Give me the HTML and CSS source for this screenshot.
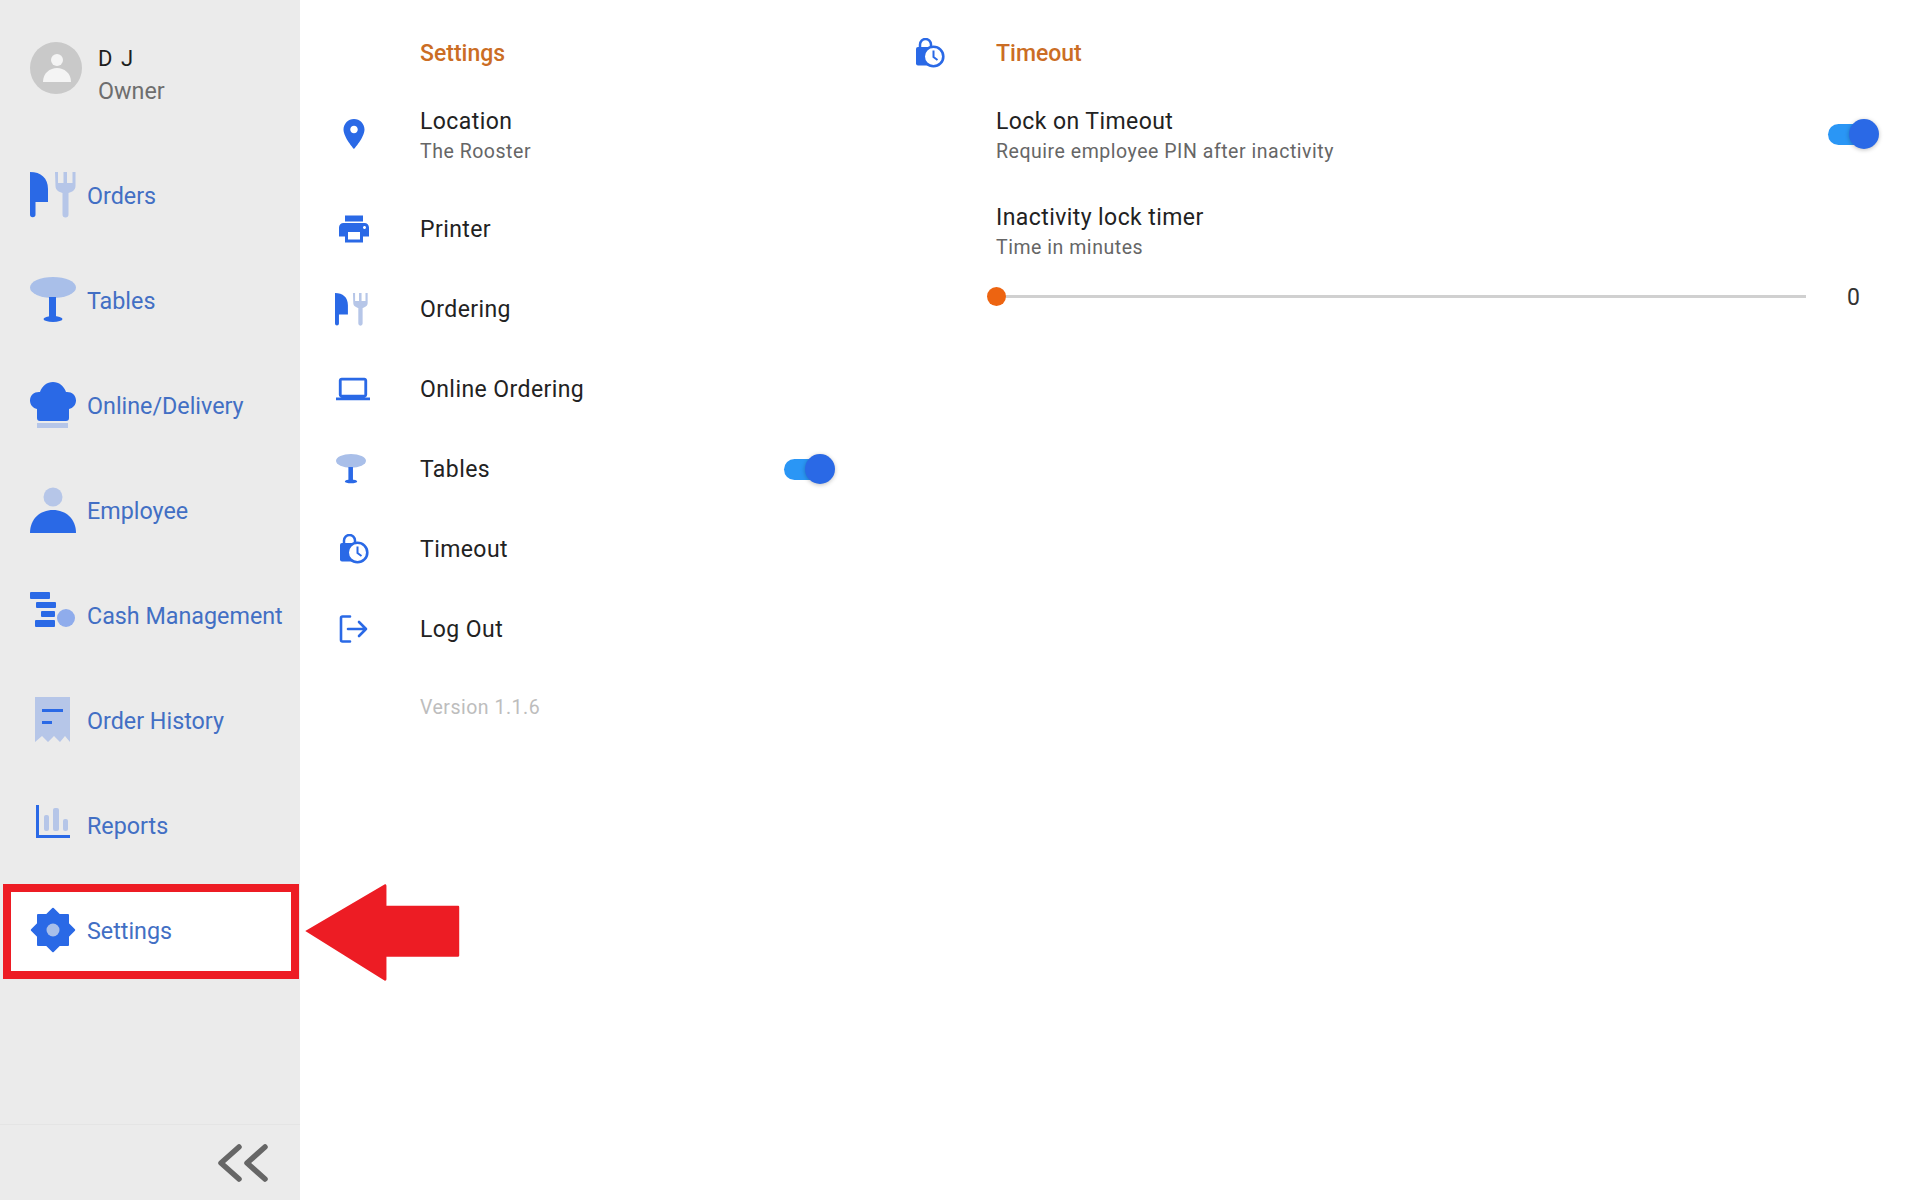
FILE: index.html
```html
<!DOCTYPE html>
<html lang="en">
<head>
<meta charset="utf-8">
<title>Settings</title>
<link rel="stylesheet" href="styles.css">
</head>
<body>
<svg class="defs" width="0" height="0" aria-hidden="true">
  <defs>
    <symbol id="i-orders" viewBox="0 0 46 46">
      <path class="dark" d="M0 0C11 0 18 6 18 17V30H5.500V42.500a2.750 2.750 0 0 1-5.500 0Z"/>
      <path class="pale" d="M25 0h3v11h5.500V0h3.500v11h5.500V0h3v14c0 4-3.500 6-7 7v21.500a3 3 0 0 1-6 0V21c-3.500-1-7-3-7-7Z"/>
    </symbol>
    <symbol id="i-tables" viewBox="0 0 46 46">
      <ellipse class="mid" cx="23" cy="10.500" rx="23" ry="10.500"/>
      <rect class="dark" x="19" y="20" width="7" height="22"/>
      <ellipse class="dark" cx="23" cy="42" rx="9.500" ry="3"/>
    </symbol>
    <symbol id="i-online" viewBox="0 0 46 46">
      <path class="dark" d="M7 27C3 26 0 23 0 18.500 0 13 4.500 9.500 10 10 12 4 17 0 23 0s11 4 13 10c5.500-.5 10 3 10 8.500 0 4.500-3 7.500-7 8.500v9c0 2-1 3-3 3H10c-2 0-3-1-3-3Z"/>
      <rect class="pale" x="7" y="41" width="31" height="5"/>
    </symbol>
    <symbol id="i-employee" viewBox="0 0 46 46">
      <circle class="pale" cx="23" cy="10" r="9.500"/>
      <path class="dark" d="M0 46C0 32 10 23 23 23S46 32 46 46Z"/>
    </symbol>
    <symbol id="i-cash" viewBox="0 0 46 46">
      <rect class="dark" x="0" y="0" width="20" height="7" rx="1"/>
      <rect class="dark" x="6" y="10" width="20" height="6" rx="1"/>
      <rect class="dark" x="11" y="19" width="14" height="6" rx="1"/>
      <rect class="dark" x="5" y="28" width="20" height="7" rx="1"/>
      <circle class="soft" cx="36" cy="26" r="9"/>
    </symbol>
    <symbol id="i-history" viewBox="0 0 46 46">
      <path class="pale" d="M5 0H40V45L35 39 30 45 24 39 18 45 12 39 5 45Z"/>
      <rect class="dark" x="12" y="12" width="21" height="3"/>
      <rect class="dark" x="12" y="24" width="10" height="3"/>
    </symbol>
    <symbol id="i-reports" viewBox="0 0 46 46">
      <rect class="dark" x="6" y="3" width="3" height="33"/>
      <rect class="dark" x="6" y="33" width="34" height="3"/>
      <rect class="pale" x="14" y="13" width="5" height="16" rx="2"/>
      <rect class="pale" x="23" y="6" width="6" height="23" rx="2"/>
      <rect class="pale" x="33" y="17" width="5" height="12" rx="2"/>
    </symbol>
    <symbol id="i-gear" viewBox="0 0 46 46">
      <rect class="dark" x="7" y="7" width="32" height="32" rx="1"/>
      <rect class="dark" x="7" y="7" width="32" height="32" rx="1" transform="rotate(45 23 23)"/>
      <circle class="mid" cx="23" cy="23" r="6.500"/>
    </symbol>
    <symbol id="i-pin" viewBox="0 0 24 24">
      <path class="dark" d="M12 2C8.130 2 5 5.130 5 9c0 5.250 7 13 7 13s7-7.750 7-13c0-3.870-3.130-7-7-7zm0 9.500c-1.380 0-2.500-1.120-2.500-2.500s1.120-2.500 2.500-2.500 2.500 1.120 2.500 2.500-1.120 2.500-2.500 2.500z"/>
    </symbol>
    <symbol id="i-print" viewBox="0 0 24 24">
      <path class="dark" d="M19 8H5c-1.660 0-3 1.340-3 3v6h4v4h12v-4h4v-6c0-1.660-1.340-3-3-3zm-3 11H8v-5h8v5zm3-7c-.550 0-1-.450-1-1s.450-1 1-1 1 .450 1 1-.450 1-1 1zm-1-9H6v4h12V3z"/>
    </symbol>
    <symbol id="i-laptop" viewBox="0 0 24 24">
      <path class="dark" d="M20 18c1.100 0 1.990-.900 1.990-2L22 6c0-1.100-.900-2-2-2H4c-1.100 0-2 .900-2 2v10c0 1.100.900 2 2 2H0v2h24v-2h-4zM4 6h16v10H4V6z"/>
    </symbol>
    <symbol id="i-timeout" viewBox="0 0 30 30">
      <path class="line" d="M5 10V6.500a5.500 5.500 0 0 1 11 0V10"/>
      <rect class="dark" x="1" y="9" width="18" height="18.500" rx="2"/>
      <circle class="ring" cx="18.500" cy="18.500" r="9.800"/>
      <path class="hand" d="M18.500 12.500V19l4 3"/>
    </symbol>
    <symbol id="i-logout" viewBox="0 0 30 30">
      <path class="exit" d="M11 2.500H3.500a1.500 1.500 0 0 0-1.500 1.500V26a1.500 1.500 0 0 0 1.500 1.500H11"/>
      <path class="exit" d="M9 15H27M20 8l7 7-7 7"/>
    </symbol>
  </defs>
</svg>

<div class="app">
  <aside class="sidebar">
    <div class="profile">
      <svg class="avatar" viewBox="0 0 52 52" aria-hidden="true">
        <circle class="avatar-bg" cx="26" cy="26" r="26"/>
        <circle class="avatar-fg" cx="27" cy="18" r="6"/>
        <path class="avatar-fg" d="M13 40C13 31 20 26 27 26S41 31 41 40Z"/>
      </svg>
      <div class="profile-text">
        <div class="profile-name">D J</div>
        <div class="profile-role">Owner</div>
      </div>
    </div>
    <nav class="nav">
      <a class="nav-item"><svg class="nav-icon"><use href="#i-orders"/></svg><span class="nav-label">Orders</span></a>
      <a class="nav-item"><svg class="nav-icon"><use href="#i-tables"/></svg><span class="nav-label">Tables</span></a>
      <a class="nav-item"><svg class="nav-icon"><use href="#i-online"/></svg><span class="nav-label">Online/Delivery</span></a>
      <a class="nav-item"><svg class="nav-icon"><use href="#i-employee"/></svg><span class="nav-label">Employee</span></a>
      <a class="nav-item"><svg class="nav-icon"><use href="#i-cash"/></svg><span class="nav-label">Cash Management</span></a>
      <a class="nav-item"><svg class="nav-icon"><use href="#i-history"/></svg><span class="nav-label">Order History</span></a>
      <a class="nav-item"><svg class="nav-icon"><use href="#i-reports"/></svg><span class="nav-label">Reports</span></a>
      <a class="nav-item nav-item-active"><svg class="nav-icon"><use href="#i-gear"/></svg><span class="nav-label">Settings</span></a>
    </nav>
    <div class="sidebar-footer">
      <svg class="collapse" viewBox="0 0 52 38" aria-hidden="true">
        <path d="M22 3L4 19l18 16M48 3L30 19l18 16"/>
      </svg>
    </div>
  </aside>

  <main class="content">
    <section class="panel panel-left">
      <div class="row row-head">
        <div class="icon-cell"></div>
        <h2 class="heading">Settings</h2>
      </div>
      <div class="row row-tall">
        <div class="icon-cell"><svg class="icon-36"><use href="#i-pin"/></svg></div>
        <div class="text"><div class="title">Location</div><div class="sub">The Rooster</div></div>
      </div>
      <div class="row">
        <div class="icon-cell"><svg class="icon-36"><use href="#i-print"/></svg></div>
        <div class="text"><div class="title">Printer</div></div>
      </div>
      <div class="row">
        <div class="icon-cell"><svg class="icon-33 shift-left"><use href="#i-orders"/></svg></div>
        <div class="text"><div class="title">Ordering</div></div>
      </div>
      <div class="row">
        <div class="icon-cell"><svg class="icon-34 shift-small"><use href="#i-laptop"/></svg></div>
        <div class="text"><div class="title">Online Ordering</div></div>
      </div>
      <div class="row">
        <div class="icon-cell"><svg class="icon-30 shift-left"><use href="#i-tables"/></svg></div>
        <div class="text"><div class="title">Tables</div></div>
        <div class="toggle"><span class="toggle-track"></span><span class="toggle-thumb"></span></div>
      </div>
      <div class="row">
        <div class="icon-cell"><svg class="icon-30"><use href="#i-timeout"/></svg></div>
        <div class="text"><div class="title">Timeout</div></div>
      </div>
      <div class="row">
        <div class="icon-cell"><svg class="icon-30"><use href="#i-logout"/></svg></div>
        <div class="text"><div class="title">Log Out</div></div>
      </div>
      <div class="row row-version">
        <div class="icon-cell"></div>
        <div class="version">Version 1.1.6</div>
      </div>
    </section>

    <section class="panel panel-right">
      <div class="row row-head">
        <div class="icon-cell"><svg class="icon-30"><use href="#i-timeout"/></svg></div>
        <h2 class="heading">Timeout</h2>
      </div>
      <div class="row row-tall">
        <div class="icon-cell"></div>
        <div class="text"><div class="title">Lock on Timeout</div><div class="sub">Require employee PIN after inactivity</div></div>
        <div class="toggle"><span class="toggle-track"></span><span class="toggle-thumb"></span></div>
      </div>
      <div class="row row-timer">
        <div class="icon-cell"></div>
        <div class="text"><div class="title">Inactivity lock timer</div><div class="sub">Time in minutes</div></div>
      </div>
      <div class="slider-row">
        <div class="slider"><span class="slider-thumb"></span></div>
        <div class="slider-value">0</div>
      </div>
    </section>
  </main>

  <svg class="callout" viewBox="0 0 158 100" aria-hidden="true">
    <path d="M2 48.500 82 1.500c1-.5 2 0 2 1.500V23H156c1 0 1.500.500 1.500 1.500V73c0 1-.5 1.500-1.500 1.500H84V97c0 1.500-1 2-2 1.500Z"/>
  </svg>
</div>
</body>
</html>
```
FILE: styles.css
```css
* { box-sizing: border-box; }
html, body { margin: 0; padding: 0; }
body {
  background: #fff;
  font-family: Roboto, "Liberation Sans", sans-serif;
  overflow: hidden;
}
.defs { position: absolute; }

.dark { fill: #2a69e6; }
.pale { fill: #b6c6e8; }
.mid { fill: #a9bfe9; }
.soft { fill: #8facec; }
.line { fill: none; stroke: #2a69e6; stroke-width: 2.5; }
.ring { fill: #fff; stroke: #2a69e6; stroke-width: 2.6; }
.hand { fill: none; stroke: #2a69e6; stroke-width: 2; }
.exit { fill: none; stroke: #2a69e6; stroke-width: 2.6; stroke-linecap: round; stroke-linejoin: round; }

.app {
  position: relative;
  display: flex;
  width: 1920px;
  height: 1200px;
}

/* Sidebar */
.sidebar {
  display: flex;
  flex-direction: column;
  flex: 0 0 300px;
  background: #ebebeb;
}
.profile {
  display: flex;
  gap: 16px;
  height: 142px;
  padding: 42px 0 0 30px;
}
.avatar { width: 52px; height: 52px; flex: none; }
.avatar-bg { fill: #c9c9c9; }
.avatar-fg { fill: #f4f4f4; }
.profile-text { padding-top: 1px; }
.profile-name {
  font-size: 22px;
  line-height: 32px;
  color: #1e1e1e;
  letter-spacing: 1.6px;
}
.profile-role {
  font-size: 23.3px;
  line-height: 32px;
  color: #6e6e6e;
}
.nav { display: flex; flex-direction: column; }
.nav-item {
  display: flex;
  align-items: center;
  gap: 11px;
  height: 105px;
  padding-left: 30px;
  font-size: 23.3px;
  color: #426fc4;
}
.nav-label { padding-top: 3px; }
.nav-icon { width: 46px; height: 46px; flex: none; }
.nav-item-active {
  width: 296px;
  height: 95px;
  margin: 7px 0 5px 3px;
  padding-left: 19px;
  padding-bottom: 4px;
  border: 8px solid #ed1c24;
  background: #fff;
}
.sidebar-footer {
  display: flex;
  align-items: center;
  justify-content: flex-end;
  height: 76px;
  margin-top: auto;
  padding-right: 31px;
  border-top: 1px solid #e4e4e4;
}
.collapse { width: 52px; height: 38px; }
.collapse path {
  fill: none;
  stroke: #666;
  stroke-width: 5.500;
  stroke-linecap: round;
  stroke-linejoin: round;
}

/* Content */
.content { display: flex; flex: 1; }
.panel {
  display: flex;
  flex-direction: column;
  padding: 27px 41px 0 24px;
}
.panel-left { flex: 0 0 576px; }
.panel-right { flex: 1; }
.row {
  display: flex;
  align-items: center;
  height: 80px;
}
.row-head { height: 52px; }
.row-tall { height: 110px; }
.row-timer { height: 86px; }
.row-version { height: 76px; }
.icon-cell {
  display: flex;
  align-items: center;
  justify-content: center;
  flex: 0 0 60px;
  margin-right: 36px;
}
.icon-36 { width: 36px; height: 36px; }
.icon-34 { width: 34px; height: 34px; }
.icon-33 { width: 33px; height: 33px; }
.icon-30 { width: 30px; height: 30px; }
.shift-left { margin-right: 6px; }
.shift-small { margin-right: 2px; }
.heading {
  margin: 0;
  font-size: 23px;
  font-weight: 500;
  color: #cb6d24;
}
.text { flex: 1; padding-top: 2px; }
.row-tall .text { padding-top: 6px; }
.title {
  font-size: 23px;
  line-height: 30px;
  color: #222;
  letter-spacing: 0.42px;
}
.sub {
  font-size: 19.500px;
  line-height: 30px;
  color: #666;
  letter-spacing: 0.53px;
}
.version {
  font-size: 19.500px;
  color: #bdbdbd;
  letter-spacing: 0.5px;
}

/* Toggle */
.toggle {
  position: relative;
  flex: none;
  width: 51px;
  height: 30px;
}
.toggle-track {
  position: absolute;
  left: 0;
  top: 5px;
  width: 41px;
  height: 21px;
  border-radius: 11px;
  background: #2a96f5;
}
.toggle-thumb {
  position: absolute;
  right: 0;
  top: 0;
  width: 30px;
  height: 30px;
  border-radius: 50%;
  background: #2a69e6;
  box-shadow: 0 1px 4px rgba(0, 0, 0, 0.25);
}

/* Slider */
.slider-row {
  display: flex;
  align-items: center;
  height: 42px;
  padding-left: 96px;
}
.slider {
  position: relative;
  flex: 1;
  height: 3px;
  background: #d0d0d0;
}
.slider-thumb {
  position: absolute;
  left: -9px;
  top: -8px;
  width: 19px;
  height: 19px;
  border-radius: 50%;
  background: #ed6411;
}
.slider-value {
  flex: 0 0 73px;
  padding-left: 41px;
  padding-top: 3px;
  font-size: 23px;
  color: #333;
}

/* Annotation arrow */
.callout {
  position: absolute;
  left: 303px;
  top: 883px;
  width: 157px;
  height: 99px;
}
.callout path { fill: #ed1c24; }
```
